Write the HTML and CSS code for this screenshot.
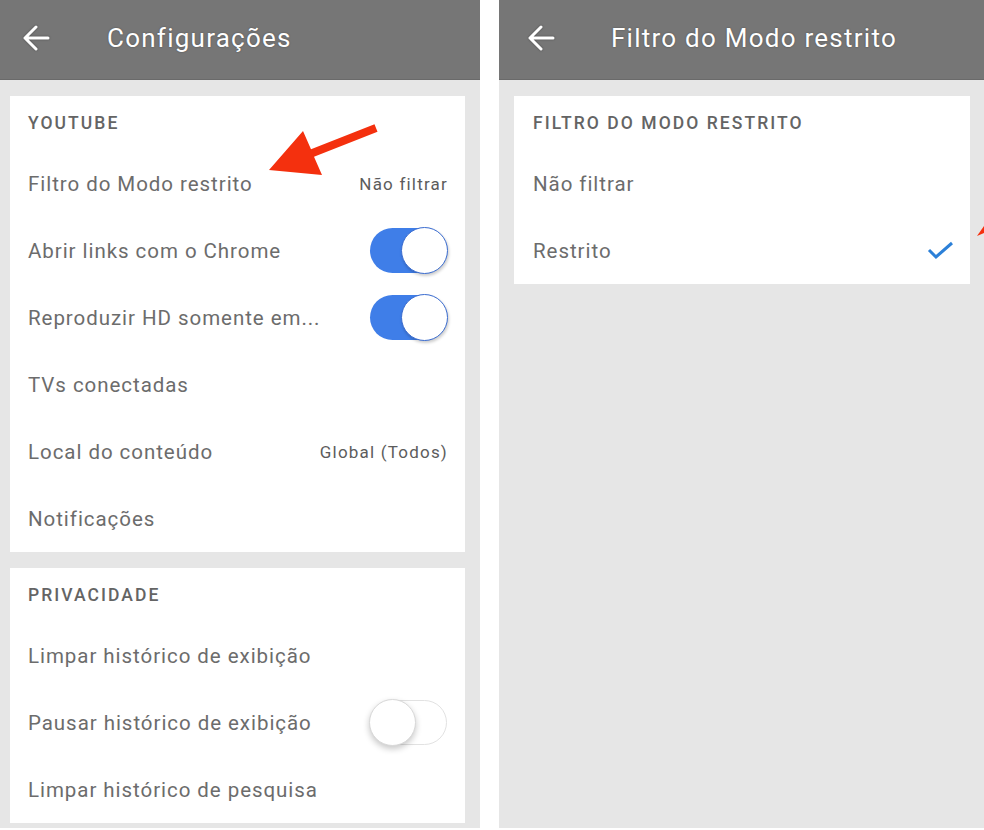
FILE: index.html
```html
<!DOCTYPE html>
<html lang="pt-BR">
<head>
<meta charset="utf-8">
<title>Configurações</title>
<link rel="stylesheet" href="styles.css">
</head>
<body>
<div class="screen">
  <section class="phone phone-left">
    <header class="appbar">
      <svg class="back" viewBox="0 0 28 26" width="28" height="26"><path d="M3 13H26M14 2L3 13L14 24" fill="none" stroke="#fff" stroke-width="3" stroke-linecap="round" stroke-linejoin="round"/></svg>
      <h1 class="title">Configurações</h1>
    </header>
    <div class="content">
      <div class="card">
        <div class="card-title">YOUTUBE</div>
        <div class="row"><span class="label">Filtro do Modo restrito</span><span class="value">Não filtrar</span></div>
        <div class="row"><span class="label">Abrir links com o Chrome</span><span class="toggle on"><span class="knob"></span></span></div>
        <div class="row"><span class="label">Reproduzir HD somente em...</span><span class="toggle on"><span class="knob"></span></span></div>
        <div class="row"><span class="label">TVs conectadas</span></div>
        <div class="row"><span class="label">Local do conteúdo</span><span class="value">Global (Todos)</span></div>
        <div class="row"><span class="label">Notificações</span></div>
      </div>
      <div class="card">
        <div class="card-title">PRIVACIDADE</div>
        <div class="row"><span class="label">Limpar histórico de exibição</span></div>
        <div class="row"><span class="label">Pausar histórico de exibição</span><span class="toggle off"><span class="knob"></span></span></div>
        <div class="row"><span class="label">Limpar histórico de pesquisa</span></div>
      </div>
    </div>
  </section>
  <section class="phone phone-right">
    <header class="appbar">
      <svg class="back" viewBox="0 0 28 26" width="28" height="26"><path d="M3 13H26M14 2L3 13L14 24" fill="none" stroke="#fff" stroke-width="3" stroke-linecap="round" stroke-linejoin="round"/></svg>
      <h1 class="title">Filtro do Modo restrito</h1>
    </header>
    <div class="content">
      <div class="card">
        <div class="card-title">FILTRO DO MODO RESTRITO</div>
        <div class="row"><span class="label">Não filtrar</span></div>
        <div class="row"><span class="label">Restrito</span><svg class="check" viewBox="0 0 30 22" width="30" height="22"><path d="M3 10L10 17L26 3" fill="none" stroke="#2c80d8" stroke-width="3"/></svg></div>
      </div>
    </div>
  </section>
  <svg class="annot" viewBox="0 0 984 830" width="984" height="830">
    <polygon fill="#f4300e" points="269,170 322,175 314,156.7 377.5,131.7 374.5,124.3 311,149.3 303,131"/>
    <polygon fill="#f4300e" points="977,236 984,226 984,233"/>
  </svg>
</div>
</body>
</html>
```
FILE: styles.css
```css
* { box-sizing: border-box; }
html, body { margin: 0; padding: 0; background: #fff; }
body { font-family: Roboto, "Noto Sans", "Liberation Sans", sans-serif; }

.screen {
  position: relative;
  width: 984px;
  height: 830px;
  display: flex;
  gap: 19px;
}

.phone {
  height: 828px;
  background: #e6e6e6;
  overflow: hidden;
  display: flex;
  flex-direction: column;
}
.phone-left { width: 480px; }
.phone-right { flex: 1; }

.appbar {
  height: 80px;
  flex: none;
  background: #767676;
  border-bottom: 1px solid #6a6a6a;
  display: flex;
  align-items: center;
  padding-bottom: 3px;
}
.phone-left .appbar { padding-left: 22px; }
.phone-right .appbar { padding-left: 28px; }

.back { flex: none; display: block; filter: drop-shadow(0 0 1px rgba(0,0,0,.35)); }

.title {
  margin: 0 0 0 57px;
  font-size: 26px;
  font-weight: 400;
  color: #fff;
  text-shadow: 0 0 2px rgba(0,0,0,.35);
  letter-spacing: 1.25px;
}
.phone-right .title { margin-left: 56px; }

.content {
  padding-top: 16px;
  display: flex;
  flex-direction: column;
  gap: 16px;
}
.phone-left .content { padding-left: 10px; padding-right: 15px; }
.phone-right .content { padding-left: 15px; padding-right: 14px; }

.card {
  background: #fff;
  flex: none;
}

.card-title {
  height: 54px;
  display: flex;
  align-items: center;
  padding: 0 18px;
  font-size: 17.5px;
  font-weight: 500;
  color: #646464;
  letter-spacing: 2.05px;
}
.phone-right .card-title { padding-left: 19px; }

.row {
  height: 67px;
  display: flex;
  align-items: center;
  justify-content: space-between;
  padding: 0 18px;
}
.phone-right .row { padding-left: 19px; padding-right: 14px; }

.label {
  font-size: 20.5px;
  color: #6c6c6c;
  letter-spacing: 0.95px;
}

.value {
  font-size: 17px;
  color: #5c5c5c;
  letter-spacing: 1.2px;
  margin-right: -1px;
}

.toggle {
  width: 77px;
  height: 45px;
  border-radius: 23px;
  display: flex;
  align-items: center;
  flex: none;
}
.toggle.on {
  background: #3f7ee8;
  justify-content: flex-end;
}
.toggle.off {
  background: #fff;
  border: 1.5px solid #e2e2e2;
  justify-content: flex-start;
}
.knob {
  width: 47px;
  height: 47px;
  border-radius: 50%;
  background: #fff;
  flex: none;
}
.toggle.on .knob {
  margin-right: -1px;
  border: 1.5px solid #3a6cd0;
  box-shadow: 1px 2px 3px rgba(0,0,0,.2);
}
.toggle.off .knob {
  margin-left: -2px;
  border: 1.5px solid #d8d8d8;
  box-shadow: 0 3px 6px rgba(0,0,0,.22);
}

.check { display: block; flex: none; }

.annot {
  position: absolute;
  left: 0;
  top: 0;
  pointer-events: none;
}
```
